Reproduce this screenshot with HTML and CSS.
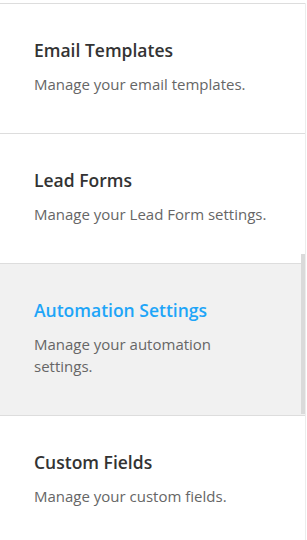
FILE: index.html
```html
<!DOCTYPE html>
<html>
<head>
<meta charset="utf-8">
<link rel="stylesheet" href="styles.css">
</head>
<body>
<div class="panel">
  <ul class="menu">
    <li class="item">
      <div class="title">Email Templates</div>
      <div class="desc">Manage your email templates.</div>
    </li>
    <li class="item">
      <div class="title">Lead Forms</div>
      <div class="desc">Manage your Lead Form settings.</div>
    </li>
    <li class="item active">
      <div class="title">Automation Settings</div>
      <div class="desc">Manage your automation<br>settings.</div>
    </li>
    <li class="item">
      <div class="title">Custom Fields</div>
      <div class="desc">Manage your custom fields.</div>
    </li>
  </ul>
  <div class="thumb"></div>
</div>
</body>
</html>
```
FILE: styles.css
```css
html, body {
  margin: 0;
  padding: 0;
  background: #fff;
}
body {
  font-family: "Open Sans", "Noto Sans", sans-serif;
  width: 307px;
  height: 540px;
  overflow: hidden;
}
.panel {
  position: relative;
  width: 305px;
  height: 537px;
  margin-top: 3px;
  border-right: 1px solid #ececec;
}
.menu {
  list-style: none;
  margin: 0;
  padding: 0;
  border-top: 1px solid #dddddd;
}
.item {
  padding: 35px 20px 38px 34px;
  border-bottom: 1px solid #dddddd;
  background: #fff;
}
.item.active {
  background: #f1f1f1;
}
.title {
  font-size: 17.5px;
  font-weight: 600;
  line-height: 22px;
  color: #333333;
  margin-bottom: 12px;
}
.active .title {
  color: #1ea5f8;
}
.desc {
  font-size: 15px;
  line-height: 22px;
  color: #666666;
}
.thumb {
  position: absolute;
  right: 0;
  top: 251px;
  width: 4px;
  height: 160px;
  background: #dadada;
}
```
